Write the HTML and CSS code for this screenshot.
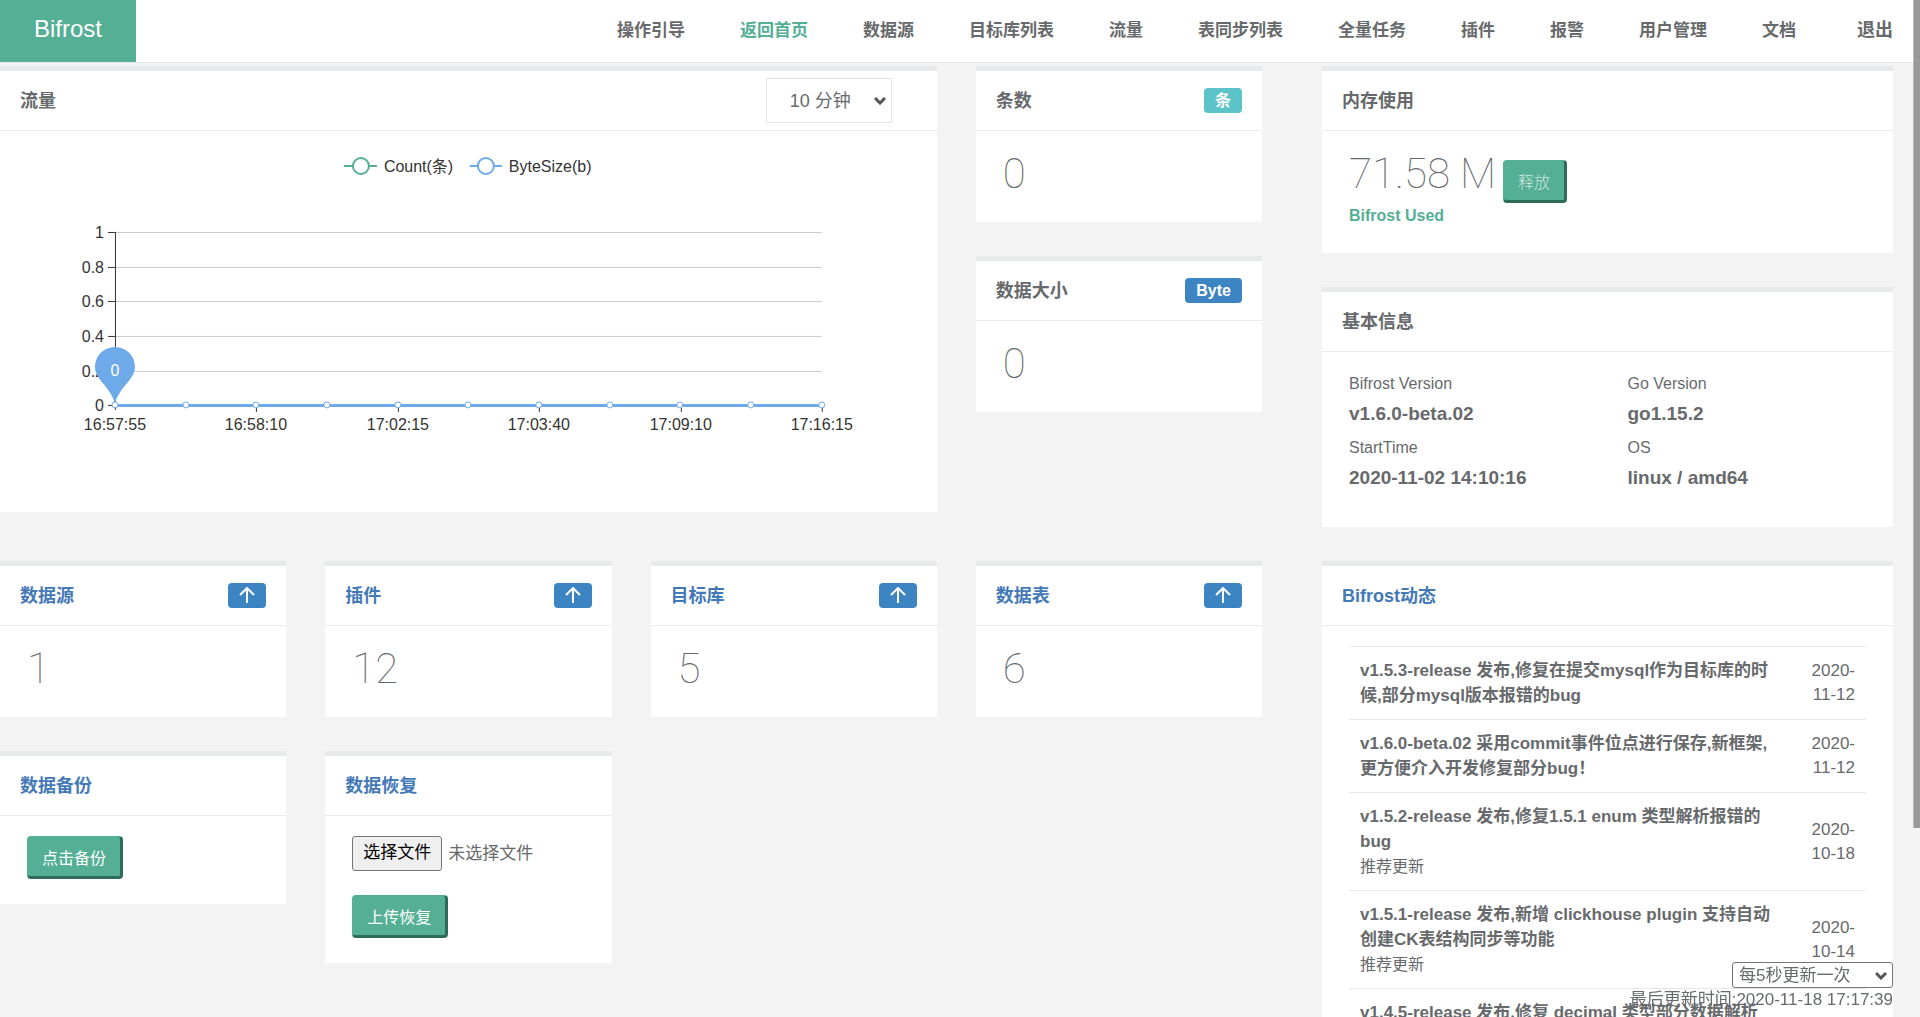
FILE: index.html
```html
<!DOCTYPE html>
<html lang="zh-CN">
<head>
    <meta charset="UTF-8">
    <meta name="viewport" content="width=device-width, initial-scale=1.0">
    <title>Bifrost</title>
    <link rel="stylesheet" href="styles.css">
</head>
<body>
    <header class="topbar">
        <a class="brand" href="#">Bifrost</a>
        <nav class="menu">
            <a href="#">操作引导</a>
            <a class="active" href="#">返回首页</a>
            <a href="#">数据源</a>
            <a href="#">目标库列表</a>
            <a href="#">流量</a>
            <a href="#">表同步列表</a>
            <a href="#">全量任务</a>
            <a href="#">插件</a>
            <a href="#">报警</a>
            <a href="#">用户管理</a>
            <a href="#">文档</a>
            <a class="logout" href="#">退出</a>
        </nav>
    </header>

    <main class="page">
        <div class="left">
            <section class="card flow-card">
                <div class="card-title">
                    <h5>流量</h5>
                    <select class="flow-select" aria-label="流量时间范围">
                        <option>10 分钟</option>
                        <option>1 小时</option>
                    </select>
                </div>
                <svg class="chart" viewBox="0 0 937 381">
                    <!-- legend -->
                    <g fill="none" stroke-width="2">
                        <path d="M344 35h8M369 35h8" stroke="#54af94"/>
                        <circle cx="361" cy="35" r="8" stroke="#54af94"/>
                        <path d="M470 35h8M494 35h8" stroke="#6eaaea"/>
                        <circle cx="486" cy="35" r="8" stroke="#6eaaea"/>
                    </g>
                    <text x="384" y="41">Count(条)</text>
                    <text x="509" y="41">ByteSize(b)</text>

                    <!-- grid lines -->
                    <path d="M115 101.500h707M115 136.500h707M115 170.500h707M115 205.500h707M115 240.500h707" stroke="#ccc"/>
                    <!-- axes -->
                    <path d="M115.500 101v178M108 101.500h7M108 136.500h7M108 170.500h7M108 205.500h7M108 240.500h7M108 274.500h714M256.500 274v7M398.500 274v7M539.500 274v7M681.500 274v7M822.500 274v7" stroke="#333"/>
                    <g text-anchor="end">
                        <text x="104" y="107">1</text>
                        <text x="104" y="142">0.8</text>
                        <text x="104" y="176">0.6</text>
                        <text x="104" y="211">0.4</text>
                        <text x="104" y="246">0.2</text>
                        <text x="104" y="280">0</text>
                    </g>
                    <g text-anchor="middle">
                        <text x="115" y="299">16:57:55</text>
                        <text x="256" y="299">16:58:10</text>
                        <text x="398" y="299">17:02:15</text>
                        <text x="539" y="299">17:03:40</text>
                        <text x="681" y="299">17:09:10</text>
                        <text x="822" y="299">17:16:15</text>
                    </g>

                    <!-- series -->
                    <path d="M115 274.500h707" stroke="#6eaaea" stroke-width="3"/>
                    <path d="M115 274C113 258 95 249 95 236a20 20 0 0 1 40 0C135 249 117 258 115 274z" fill="#6eaaea"/>
                    <text class="pin-text" x="115" y="245" text-anchor="middle">0</text>
                    <g fill="#fff" stroke="#6eaaea" stroke-width="1">
                        <circle cx="115" cy="274" r="3"/>
                        <circle cx="186" cy="274" r="3"/>
                        <circle cx="256" cy="274" r="3"/>
                        <circle cx="327" cy="274" r="3"/>
                        <circle cx="398" cy="274" r="3"/>
                        <circle cx="468" cy="274" r="3"/>
                        <circle cx="539" cy="274" r="3"/>
                        <circle cx="610" cy="274" r="3"/>
                        <circle cx="680" cy="274" r="3"/>
                        <circle cx="751" cy="274" r="3"/>
                        <circle cx="822" cy="274" r="3"/>
                    </g>
                </svg>
            </section>
            <div class="stack">
                <section class="card">
                    <div class="card-title"><h5>条数</h5><span class="badge badge-info">条</span></div>
                    <div class="card-body"><div class="number">0</div></div>
                </section>
                <section class="card">
                    <div class="card-title"><h5>数据大小</h5><span class="badge">Byte</span></div>
                    <div class="card-body"><div class="number">0</div></div>
                </section>
            </div>
        </div>

        <div class="stack">
            <section class="card">
                <div class="card-title"><h5>内存使用</h5></div>
                <div class="card-body">
                    <div class="memory">
                        <div class="number">71.58 M</div>
                        <button type="button" class="btn btn-light">释放</button>
                    </div>
                    <div class="used">Bifrost Used</div>
                </div>
            </section>
            <section class="card">
                <div class="card-title"><h5>基本信息</h5></div>
                <div class="card-body">
                    <dl class="info">
                        <div><dt>Bifrost Version</dt><dd>v1.6.0-beta.02</dd></div>
                        <div><dt>Go Version</dt><dd>go1.15.2</dd></div>
                        <div><dt>StartTime</dt><dd>2020-11-02 14:10:16</dd></div>
                        <div><dt>OS</dt><dd>linux / amd64</dd></div>
                    </dl>
                </div>
            </section>
        </div>

        <div class="left">
            <section class="card">
                <div class="card-title">
                    <h5><a href="#">数据源</a></h5>
                    <span class="badge"><svg width="16" height="17" viewBox="0 0 16 17"><path d="M8 16V2M1 8l7-7 7 7"/></svg></span>
                </div>
                <div class="card-body"><div class="number">1</div></div>
            </section>
            <section class="card">
                <div class="card-title">
                    <h5><a href="#">插件</a></h5>
                    <span class="badge"><svg width="16" height="17" viewBox="0 0 16 17"><path d="M8 16V2M1 8l7-7 7 7"/></svg></span>
                </div>
                <div class="card-body"><div class="number">12</div></div>
            </section>
            <section class="card">
                <div class="card-title">
                    <h5><a href="#">目标库</a></h5>
                    <span class="badge"><svg width="16" height="17" viewBox="0 0 16 17"><path d="M8 16V2M1 8l7-7 7 7"/></svg></span>
                </div>
                <div class="card-body"><div class="number">5</div></div>
            </section>
            <section class="card">
                <div class="card-title">
                    <h5><a href="#">数据表</a></h5>
                    <span class="badge"><svg width="16" height="17" viewBox="0 0 16 17"><path d="M8 16V2M1 8l7-7 7 7"/></svg></span>
                </div>
                <div class="card-body"><div class="number">6</div></div>
            </section>

            <section class="card">
                <div class="card-title"><h5><a href="#">数据备份</a></h5></div>
                <div class="card-body">
                    <button type="button" class="btn">点击备份</button>
                </div>
            </section>
            <section class="card">
                <div class="card-title"><h5><a href="#">数据恢复</a></h5></div>
                <form class="card-body restore">
                    <div class="file-row">
                        <input class="file-input" type="file" id="backup-file">
                        <label class="file-button" for="backup-file">选择文件</label>
                        <span>未选择文件</span>
                    </div>
                    <button type="button" class="btn">上传恢复</button>
                </form>
            </section>
        </div>

        <section class="card">
            <div class="card-title"><h5><a href="#">Bifrost动态</a></h5></div>
            <div class="card-body">
                <table class="news">
                    <tr>
                        <td><b>v1.5.3-release 发布,修复在提交mysql作为目标库的时候,部分mysql版本报错的bug</b></td>
                        <td class="date">2020-11-12</td>
                    </tr>
                    <tr>
                        <td><b>v1.6.0-beta.02 采用commit事件位点进行保存,新框架,更方便介入开发修复部分bug！</b></td>
                        <td class="date">2020-11-12</td>
                    </tr>
                    <tr>
                        <td><b>v1.5.2-release 发布,修复1.5.1 enum 类型解析报错的bug</b><small>推荐更新</small></td>
                        <td class="date">2020-10-18</td>
                    </tr>
                    <tr>
                        <td><b>v1.5.1-release 发布,新增 clickhouse plugin 支持自动创建CK表结构同步等功能</b><small>推荐更新</small></td>
                        <td class="date">2020-10-14</td>
                    </tr>
                    <tr>
                        <td><b>v1.4.5-release 发布,修复 decimal 类型部分数据解析</b></td>
                        <td class="date"></td>
                    </tr>
                </table>
            </div>
        </section>
    </main>

    <div class="refresh">
        <select class="refresh-select" aria-label="更新频率">
            <option>每5秒更新一次</option>
            <option>每10秒更新一次</option>
        </select>
        <div>最后更新时间:2020-11-18 17:17:39</div>
    </div>
    <div class="scrollbar"></div>
</body>
</html>
```
FILE: styles.css
```css
* {
    box-sizing: border-box;
}
body {
    margin: 0;
    height: 100vh;
    overflow: hidden;
    background-color: #f3f3f3;
    color: #676a6c;
    font-family: "Liberation Sans", "Noto Sans CJK SC", sans-serif;
    font-size: 17px;
    line-height: 24px;
}
a {
    color: #4479b7;
    text-decoration: none;
}
button, select {
    font-family: inherit;
}
select {
    appearance: none;
    background: #fff url("data:image/svg+xml,%3Csvg xmlns='http://www.w3.org/2000/svg' width='12' height='9' viewBox='0 0 12 9'%3E%3Cpath d='M1 2l5 5 5-5' fill='none' stroke='%23555' stroke-width='3'/%3E%3C/svg%3E") no-repeat right 5px center;
    color: #676a6c;
}

/* top menu */
.topbar {
    display: flex;
    justify-content: space-between;
    height: 63px;
    padding-right: 27px;
    background: #fff;
    border-bottom: 1px solid #e7e8ea;
}
.brand {
    width: 136px;
    background: #54af94;
    color: #fff;
    font-size: 24px;
    line-height: 58px;
    text-align: center;
}
.menu {
    display: flex;
    gap: 55px;
    line-height: 61px;
    font-weight: bold;
}
.menu a {
    color: #676a6c;
}
.menu .active {
    color: #54af94;
}
.menu .logout {
    margin-left: 6px;
    font-size: 18px;
}

/* page grid */
.page {
    display: grid;
    grid-template-columns: 1262fr 571fr;
    gap: 34px 60px;
    align-items: start;
    padding: 3px 27px 34px 0;
}
.left {
    display: grid;
    grid-template-columns: repeat(4, 1fr);
    gap: 34px 39px;
    align-items: start;
}
.stack {
    display: flex;
    flex-direction: column;
    gap: 34px;
}

/* cards */
.card {
    background: #fff;
    border-top: 5px solid #e7e9eb;
}
.card-title {
    display: flex;
    justify-content: space-between;
    align-items: center;
    height: 60px;
    padding: 0 20px;
    border-bottom: 1px solid #ebebec;
}
.card-title h5 {
    margin: 0;
    font-size: 18px;
}
.card-body {
    padding: 20px 27px 25px;
}
.number {
    font-family: Roboto, sans-serif;
    font-size: 42px;
    font-weight: 100;
    line-height: 46px;
}
.badge {
    display: flex;
    align-items: center;
    justify-content: center;
    height: 25px;
    padding: 0 11px;
    border-radius: 4px;
    background: #3d84c3;
    color: #fff;
    font-size: 16px;
    font-weight: bold;
}
.badge-info {
    background: #5cc3c8;
}
.badge svg {
    fill: none;
    stroke: #fff;
    stroke-width: 2;
}
.btn {
    display: block;
    height: 43px;
    padding: 0 14px;
    border: 3px solid;
    border-width: 1px 3px 3px 1px;
    border-color: #54af94 #2f6b59 #2f6b59 #54af94;
    border-radius: 4px;
    background: #54af94;
    color: #fff;
    font-size: 16px;
}
.btn-light {
    margin-top: 9px;
    font-weight: 100;
}

/* flow chart */
.flow-card {
    grid-column: span 3;
}
.flow-select {
    width: 126px;
    height: 45px;
    margin-right: 25px;
    padding: 0 0 0 23px;
    border: 1px solid #e5e6e7;
    font-size: 18px;
}
.chart {
    display: block;
    width: 100%;
    font-size: 16px;
    fill: #333;
}
.chart .pin-text {
    fill: #fff;
}

/* memory and basic info */
.memory {
    display: flex;
    gap: 7px;
}
.used {
    color: #54af94;
    font-size: 16px;
    font-weight: bold;
    line-height: 25px;
}
.info {
    display: grid;
    grid-template-columns: 1fr 1fr;
    gap: 4px 40px;
    margin: 0 0 6px;
}
.info dt {
    font-size: 16px;
}
.info dd {
    margin: 0;
    font-size: 19px;
    font-weight: bold;
    line-height: 36px;
}

/* restore form */
.restore {
    display: flex;
    flex-direction: column;
    align-items: flex-start;
    gap: 24px;
}
.file-row {
    display: flex;
    align-items: center;
    gap: 6px;
}
.file-input {
    position: absolute;
    width: 1px;
    height: 1px;
    opacity: 0;
}
.file-button {
    padding: 4px 10px 5px;
    border: 1px solid #767676;
    border-radius: 3px;
    background: #efefef;
    color: #000;
}

/* news */
.news {
    width: 100%;
    border-collapse: collapse;
}
.news td {
    padding: 11px;
    border-top: 1px solid #e7e8ea;
}
.news b {
    display: block;
    line-height: 25px;
}
.news small {
    display: block;
    font-size: 16px;
    line-height: 25px;
}
.news .date {
    width: 72px;
    text-align: right;
}

/* refresh box in the corner of the window */
.refresh {
    position: fixed;
    right: 27px;
    bottom: 5px;
    text-align: right;
}
.refresh-select {
    display: block;
    width: 161px;
    height: 26px;
    margin-left: auto;
    padding: 0 0 0 6px;
    border: 1px solid #767676;
    border-radius: 3px;
    font-size: 17px;
}
.scrollbar {
    position: fixed;
    top: 0;
    right: 0;
    width: 7px;
    height: calc(100vh - 189px);
    background: #999;
    border-left: 1px solid #bbb;
}
```
